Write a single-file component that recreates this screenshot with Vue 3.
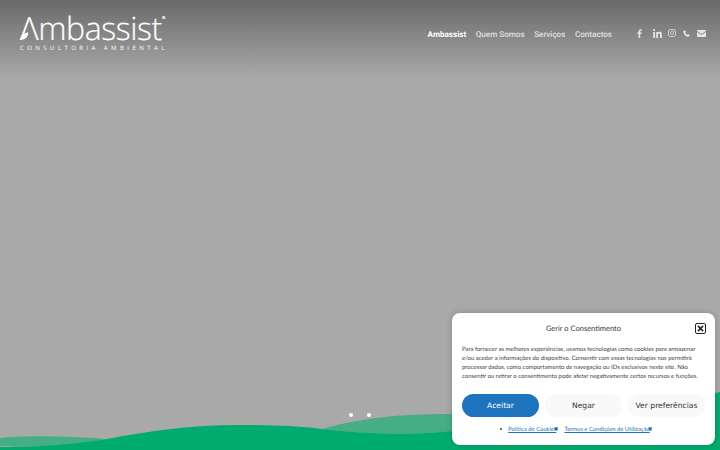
<script setup>
const navLinks = [
  { label: 'Ambassist', active: true },
  { label: 'Quem Somos' },
  { label: 'Serviços' },
  { label: 'Contactos' }
]
const policyLinks = ['Política de Cookies', 'Termos e Condições de Utilização']
</script>

<template>
  <div class="hero">
    <header class="header">
      <a class="logo">
        <div class="logo-word">
          <svg class="leaf" viewBox="0 0 12 12"><path d="M0.5 11.5C0.5 6.5 4.5 2.5 11 1.5C11 7 8 11.5 0.5 11.5Z" fill="#fff" /></svg>
          <span>Λmbassist</span><sup>®</sup>
        </div>
        <div class="logo-sub">CONSULTORIA AMBIENTAL</div>
      </a>
      <nav class="nav">
        <a v-for="link in navLinks" :key="link.label" :class="{ active: link.active }">{{ link.label }}</a>
      </nav>
      <div class="social">
        <svg class="ic-fb" viewBox="0 0 10 18"><path d="M6.4 18V10h2.7l.4-3.2H6.4V4.900c0-.9.3-1.500 1.600-1.500h1.600V.6C9.300.5 8.400.4 7.300.4 4.900.4 3.300 1.900 3.300 4.500v2.300H.6V10h2.700v8z" fill="currentColor" /></svg>
        <svg class="ic-in" viewBox="0 0 18 18"><path d="M.4 6h3.700v12H.4zM2.200 0a2.100 2.100 0 1 1 0 4.300 2.100 2.100 0 0 1 0-4.300zM6.400 6h3.500v1.600c.5-.9 1.700-1.900 3.500-1.900 3.700 0 4.400 2.400 4.400 5.600V18h-3.700v-5.900c0-1.400 0-3.200-2-3.200s-2.200 1.500-2.200 3.100v6H6.400z" fill="currentColor" /></svg>
        <svg class="ic-ig" viewBox="0 0 16 16"><rect x="1" y="1" width="14" height="14" rx="3.500" fill="none" stroke="currentColor" stroke-width="1.500" /><circle cx="8" cy="8" r="3.200" fill="none" stroke="currentColor" stroke-width="1.500" /><circle cx="12" cy="4" r="1" fill="currentColor" /></svg>
        <svg class="ic-ph" viewBox="0 0 16 16"><path d="M3.600.8 1.300 2.300C.6 2.800.5 3.700.7 4.600c.9 3.600 2.600 6.200 5.100 8.300 2 1.700 4.200 2.700 6 2.500.8-.1 1.400-.6 1.900-1.300l1.300-1.800c.2-.3.100-.7-.2-.9l-3-2c-.3-.2-.6-.1-.8.100l-1.200 1.300c-.2.200-.5.300-.8.100-1.600-1-2.900-2.600-3.700-4.300-.1-.3 0-.6.200-.8l1.400-1C7.100 4.600 7.200 4.300 7 4L4.500 1c-.2-.3-.6-.4-.9-.2z" fill="currentColor" /></svg>
        <svg class="ic-ml" viewBox="0 0 18 14"><path d="M1.500 0h15C17.300 0 18 .7 18 1.500v.7L9 7.800 0 2.200v-.7C0 .7.700 0 1.500 0zM0 4.200l9 5.600 9-5.600v8.300c0 .8-.7 1.500-1.500 1.500h-15C.7 14 0 13.300 0 12.500z" fill="currentColor" /></svg>
      </div>
    </header>

    <svg class="waves" viewBox="0 0 720 60" preserveAspectRatio="none">
      <path d="M0 48C20 46 50 45 107 49C70 57 30 57 0 56Z" fill="#45ae84" />
      <path d="M322 39C360 28 400 24 450 24H470V40C420 45 370 45 322 39Z" fill="#45ae84" />
      <path d="M0 57C40 57 80 54 107 49C150 41 190 35 240 35C270 35 300 36 322 39C370 45 420 45 465 40C560 32 650 20 720 2V60H0Z" fill="#00ab6e" />
    </svg>

    <div class="dots"><span></span><span></span></div>

    <section class="cookie">
      <div class="cookie-head">
        <span>Gerir o Consentimento</span>
        <button class="close" aria-label="Fechar">
          <svg viewBox="0 0 12 12"><path d="M2.500 2.500L9.500 9.500M9.500 2.500L2.500 9.500" stroke="#222" stroke-width="2" /></svg>
        </button>
      </div>
      <p class="cookie-text">Para fornecer as melhores experiências, usamos tecnologias como cookies para armazenar e/ou aceder a informações do dispositivo. Consentir com essas tecnologias nos permitirá processar dados, como comportamento de navegação ou IDs exclusivos neste site. Não consentir ou retirar o consentimento pode afetar negativamente certos recursos e funções.</p>
      <div class="cookie-btns">
        <button class="primary">Aceitar</button>
        <button>Negar</button>
        <button>Ver preferências</button>
      </div>
      <ul class="cookie-links">
        <li>
          <a v-for="link in policyLinks" :key="link">{{ link }}<svg viewBox="0 0 8 8"><rect x="1" y="2" width="5" height="5" fill="#1e73be" /></svg></a>
        </li>
      </ul>
    </section>
  </div>
</template>

<style>
html, body {
  margin: 0;
  overflow: hidden;
}
</style>

<style scoped>
.hero {
  position: relative;
  width: 720px;
  height: 450px;
  overflow: hidden;
  background: linear-gradient(#6a6a6a, #a9a9a9 78px);
  font-family: Roboto, sans-serif;
  text-rendering: geometricPrecision;
}

.header {
  display: flex;
  align-items: center;
  height: 66px;
  padding: 0 14px 0 20px;
  box-sizing: border-box;
  color: #fff;
}

.logo {
  display: block;
  width: 146px;
}

.logo-word {
  position: relative;
  display: flex;
  height: 29px;
  font-family: "Open Sans", sans-serif;
  font-weight: 300;
  font-size: 32px;
  line-height: 29px;
  letter-spacing: -0.4px;
  white-space: nowrap;
  -webkit-text-stroke: 0.2px #fff;
}

.leaf {
  position: absolute;
  left: 0;
  top: 17px;
  width: 9px;
  height: 9px;
}

.logo-word sup {
  font-size: 4px;
  line-height: 10px;
}

.logo-sub {
  margin-top: 1px;
  font-family: "Open Sans", sans-serif;
  font-size: 6px;
  line-height: 8px;
  letter-spacing: 3.450px;
  white-space: nowrap;
}

.nav {
  display: flex;
  gap: 9.600px;
  margin-top: 1px;
  margin-left: auto;
  font-size: 8.100px;
  font-weight: 500;
  color: #e0e0e0;
}

.nav .active {
  color: #fff;
  font-weight: 700;
}

.social {
  display: flex;
  align-items: center;
  margin-left: 24.500px;
  color: #e6e6e6;
}

.social svg {
  display: block;
}

.ic-fb { width: 5px; height: 9px; margin-right: 11px; }
.ic-in { width: 9px; height: 9px; margin-right: 6.500px; }
.ic-ig { width: 8px; height: 8px; margin-right: 6.500px; }
.ic-ph { width: 7px; height: 7px; margin-right: 7.500px; }
.ic-ml { width: 9px; height: 7px; }

.dots {
  position: absolute;
  left: 349px;
  top: 413px;
  display: flex;
  gap: 14px;
}

.dots span {
  width: 4px;
  height: 4px;
  border-radius: 50%;
  background: #fff;
}

.waves {
  position: absolute;
  left: 0;
  bottom: 0;
  width: 720px;
  height: 60px;
}

.cookie {
  position: absolute;
  left: 452px;
  top: 313px;
  width: 263px;
  height: 132px;
  box-sizing: border-box;
  padding: 0 10px;
  border-radius: 8px;
  background: #fff;
  box-shadow: 0 0 6px rgba(0, 0, 0, 0.2);
  font-family: Lato, sans-serif;
  color: #444;
}

.cookie-head {
  position: relative;
  display: flex;
  justify-content: center;
  align-items: center;
  height: 30px;
  font-size: 7.500px;
  color: #333;
}

.close {
  position: absolute;
  right: -1px;
  top: 10px;
  width: 11px;
  height: 11px;
  padding: 0;
  border: 1.500px solid #222;
  border-radius: 2px;
  background: none;
}

.close svg {
  display: block;
  width: 100%;
  height: 100%;
}

.cookie-text {
  margin: 2px 0 0;
  font-size: 5.950px;
  line-height: 9px;
}

.cookie-btns {
  display: flex;
  gap: 6px;
  margin-top: 13px;
}

.cookie-btns button {
  flex: 1;
  height: 23px;
  padding: 0;
  border: none;
  border-radius: 12px;
  background: #f9f9f9;
  color: #333;
  font-family: "DejaVu Sans", sans-serif;
  font-size: 7.600px;
  text-rendering: geometricPrecision;
}

.cookie-btns .primary {
  background: #1e73be;
  color: #fff;
}

.cookie-links {
  display: flex;
  justify-content: center;
  margin: 9px 0 0;
  padding: 0 14px 0 0;
  list-style: none;
  font-size: 5.800px;
  line-height: 8px;
  color: #1e73be;
}

.cookie-links li::before {
  content: "";
  display: inline-block;
  width: 2px;
  height: 2px;
  margin-right: 1px;
  border-radius: 50%;
  background: #444;
  vertical-align: 1px;
}

.cookie-links a {
  margin-left: 5px;
  text-decoration: underline;
}

.cookie-links svg {
  width: 5px;
  height: 5px;
  margin-left: -2px;
}
</style>
